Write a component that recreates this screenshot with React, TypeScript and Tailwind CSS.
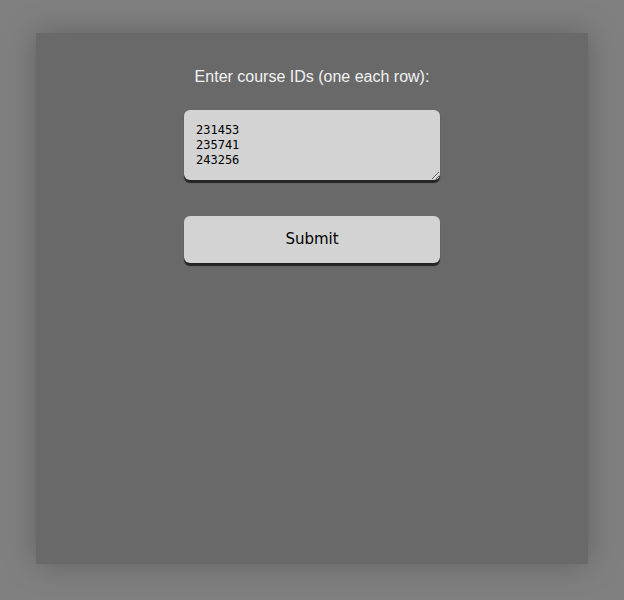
import React from 'react';

const App: React.FC = () => {
  return (
    <div className="min-h-[600px] bg-[#808080] pt-[33px] flex justify-center">
      <div className="w-[552px] h-[531px] bg-[#696969] shadow-[0_0_30px_rgba(0,0,0,0.25)] flex flex-col items-center">
        <p className="mt-[33px] text-[16px] leading-[22px] text-[#f2f2f2] font-['Liberation_Sans',Arial,sans-serif]">
          Enter course IDs (one each row):
        </p>
        <textarea
          className="mt-[22px] w-[256px] h-[70px] bg-[#d3d3d3] rounded-[6px] px-[12px] pt-[13px] pb-[11px] text-[12px] leading-[15px] text-black font-['DejaVu_Sans_Mono',monospace] shadow-[0_3px_1px_rgba(0,0,0,0.65)] outline-none"
          defaultValue={'231453\n235741\n243256'}
        />
        <button className="mt-[36px] w-[256px] h-[47px] bg-[#d3d3d3] rounded-[6px] text-[15px] text-black font-['DejaVu_Sans',sans-serif] shadow-[0_3px_1px_rgba(0,0,0,0.65)]">
          Submit
        </button>
      </div>
    </div>
  );
};

export default App;
